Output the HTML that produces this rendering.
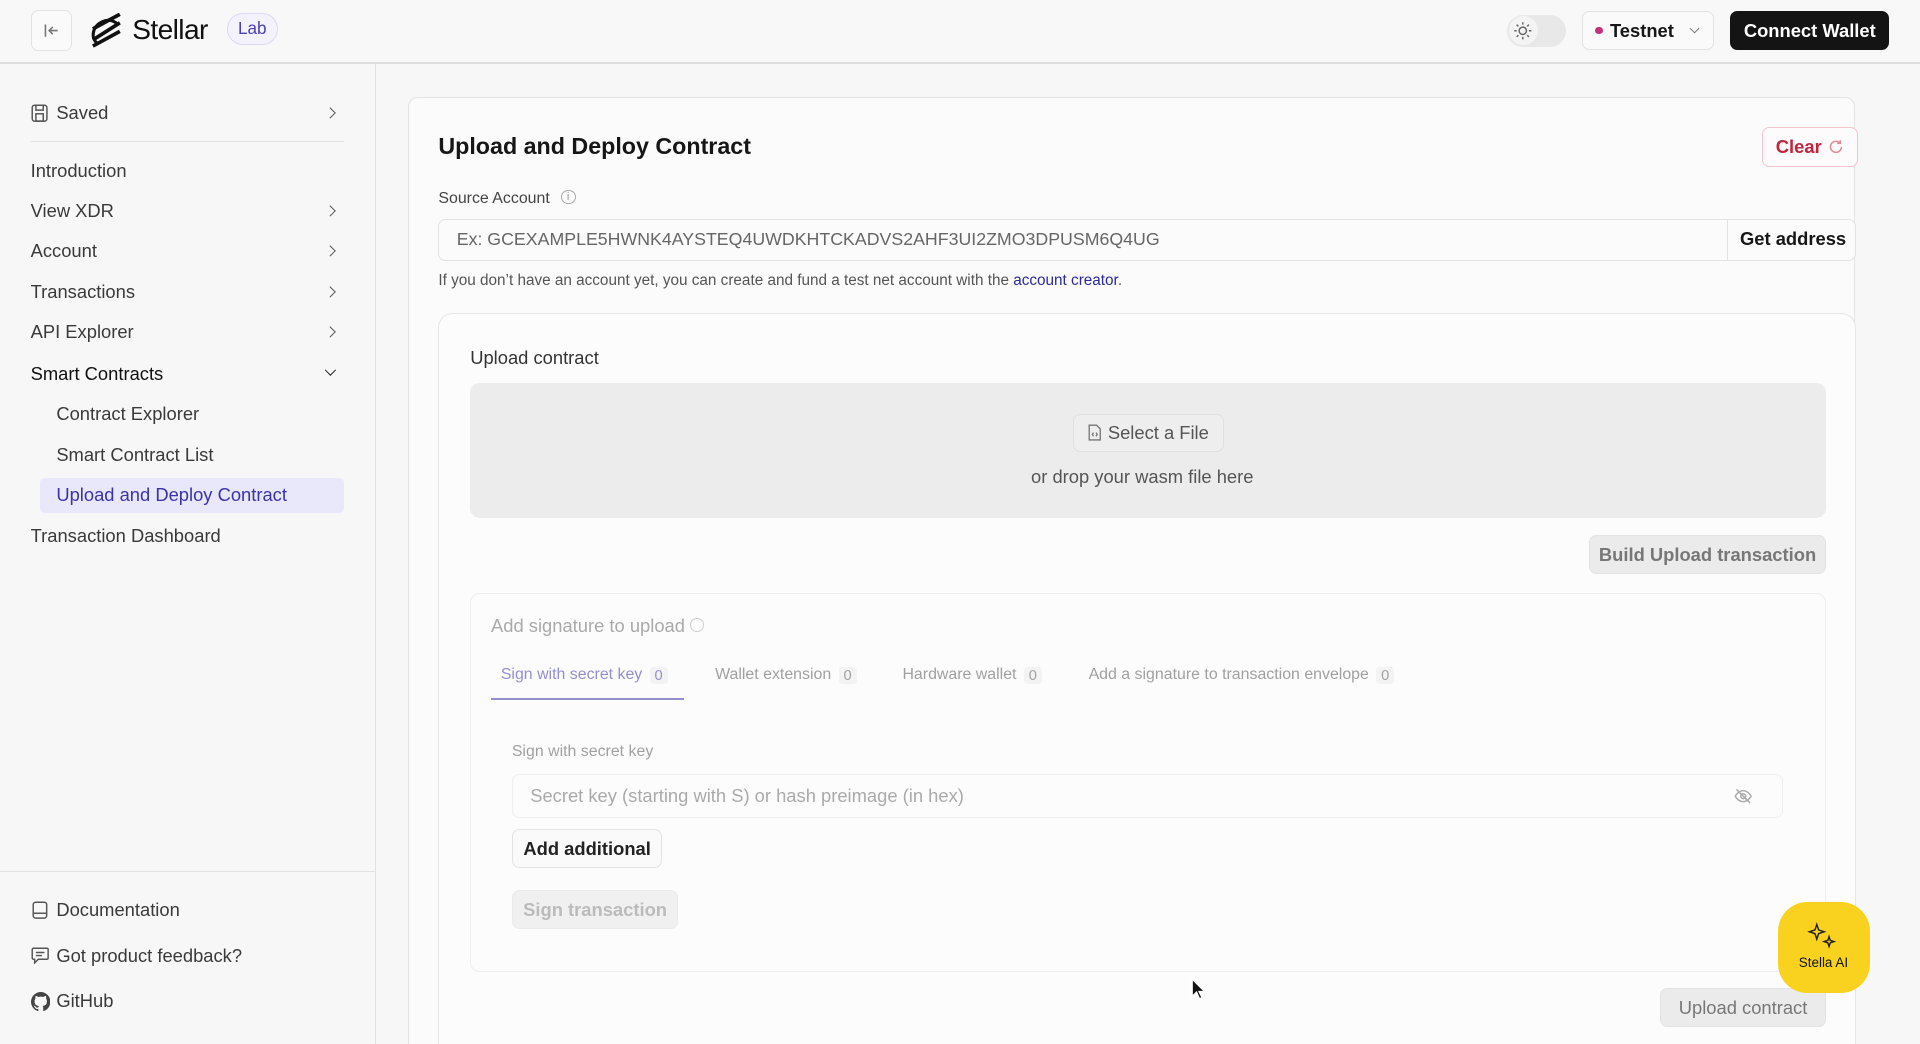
<!DOCTYPE html>
<html><head><meta charset="utf-8"><style>
html,body{margin:0;padding:0;overflow:hidden;height:1044px;width:1920px;background:#f7f7f7;}
#w{width:1568px;height:853px;zoom:1.22449;background:#f7f7f7;font-family:"Liberation Sans",sans-serif;color:#171717;position:relative;overflow:hidden;}
.a{position:absolute;}
.t{position:absolute;white-space:nowrap;line-height:1;}
.nav{font-size:15px;color:#3a3a3a;left:25px;}
.chev{position:absolute;left:266px;width:6px;height:6px;border-right:1.5px solid #555;border-top:1.5px solid #555;transform:rotate(45deg);}
.btn{position:absolute;border:1px solid #e3e3e3;border-radius:6px;box-sizing:border-box;display:flex;align-items:center;justify-content:center;font-weight:bold;font-size:15px;}
.fade{opacity:.55}
.badge{display:inline-block;background:#ececec;border-radius:3px;padding:1px 4px;margin-left:6px;font-size:12px;}
</style></head><body><div id="w">
<div class="a" style="left:0;top:0;width:1568px;height:51px;background:#f8f8f8;border-bottom:2px solid #dedede;"></div>
<div class="btn" style="left:25px;top:8px;width:34px;height:34px;background:#fafafa;"><svg width="14" height="14" viewBox="0 0 14 14" fill="none" stroke="#777" stroke-width="1.3"><path d="M2 2v10M12 7H5M8 4L5 7l3 3"/></svg></div>
<svg class="a" style="left:72px;top:11px" width="30" height="28" viewBox="0 0 30 28" fill="none" stroke="#111" stroke-width="3"><path d="M4 22L26 8M4 13L26 1M4 27L26 15"/><path d="M8 25c-6-4-5-14 4-18 4-2 9-1 12 2" stroke-width="2.5"/></svg>
<div class="t" style="left:108px;top:13px;font-size:23px;color:#111;letter-spacing:-0.5px">Stellar</div>
<div class="a" style="left:185px;top:11px;width:42px;height:26px;border:1px solid #ddd8f5;border-radius:13px;box-sizing:border-box;background:#f4f2fd;color:#4b40b5;font-size:14px;text-align:center;line-height:24px">Lab</div>
<div class="a" style="left:1231px;top:12px;width:48px;height:26px;border-radius:13px;background:#e8e8e8;"></div>
<div class="a" style="left:1232px;top:13px;width:24px;height:24px;border-radius:12px;background:#f4f4f4;"></div>
<svg class="a" style="left:1236px;top:17px" width="16" height="16" viewBox="0 0 16 16" fill="none" stroke="#666" stroke-width="1.2"><circle cx="8" cy="8" r="3"/><path d="M8 1v2M8 13v2M1 8h2M13 8h2M3 3l1.4 1.4M11.6 11.6L13 13M3 13l1.4-1.4M11.6 4.4L13 3"/></svg>
<div class="btn" style="left:1292px;top:9px;width:108px;height:32px;background:#fafafa;justify-content:flex-start;padding-left:10px;"><span style="width:6px;height:6px;border-radius:3px;background:#c2327a;margin-right:6px"></span>Testnet<span style="width:5px;height:5px;border-right:1.2px solid #777;border-bottom:1.2px solid #777;transform:rotate(45deg);margin-left:14px;margin-top:-4px"></span></div>
<div class="btn" style="left:1413px;top:9px;width:130px;height:32px;background:#141414;color:#fff;border:none;">Connect Wallet</div>
<div class="a" style="left:306px;top:52px;width:1px;height:801px;background:#e2e2e2"></div>
<svg class="a" style="left:25px;top:85px" width="14" height="15" viewBox="0 0 14 15" fill="none" stroke="#555" stroke-width="1.2"><rect x="1" y="1" width="12" height="13" rx="2"/><rect x="4" y="8" width="6" height="6"/><path d="M4 1v4h6V1"/></svg>
<div class="t nav" style="left:46px;top:85px">Saved</div><div class="chev" style="top:89px"></div>
<div class="a" style="left:25px;top:115px;width:256px;height:1px;background:#e2e2e2"></div>
<div class="t nav" style="top:132px">Introduction</div>
<div class="t nav" style="top:165px">View XDR</div><div class="chev" style="top:169px"></div>
<div class="t nav" style="top:198px">Account</div><div class="chev" style="top:202px"></div>
<div class="t nav" style="top:231px">Transactions</div><div class="chev" style="top:235px"></div>
<div class="t nav" style="top:264px">API Explorer</div><div class="chev" style="top:268px"></div>
<div class="t nav" style="top:298px;color:#111">Smart Contracts</div><div class="chev" style="top:299px;transform:rotate(135deg);border-color:#222"></div>
<div class="t nav" style="left:46px;top:331px">Contract Explorer</div>
<div class="t nav" style="left:46px;top:364px">Smart Contract List</div>
<div class="a" style="left:33px;top:390px;width:248px;height:29px;background:#e9e7fa;border-radius:4px"></div>
<div class="t nav" style="left:46px;top:397px;color:#3d33a8">Upload and Deploy Contract</div>
<div class="t nav" style="top:430px">Transaction Dashboard</div>
<div class="a" style="left:0;top:711px;width:306px;height:1px;background:#e2e2e2"></div>
<svg class="a" style="left:26px;top:736px" width="13" height="15" viewBox="0 0 13 15" fill="none" stroke="#555" stroke-width="1.2"><rect x="1" y="1" width="11" height="13" rx="2"/><path d="M1 10h11"/></svg>
<div class="t nav" style="left:46px;top:736px">Documentation</div>
<svg class="a" style="left:25px;top:773px" width="15" height="14" viewBox="0 0 15 14" fill="none" stroke="#555" stroke-width="1.2"><path d="M2 1h11a1 1 0 0 1 1 1v7a1 1 0 0 1-1 1H6l-3 3v-3H2a1 1 0 0 1-1-1V2a1 1 0 0 1 1-1zM4 4.5h7M4 7h5"/></svg>
<div class="t nav" style="left:46px;top:773px">Got product feedback?</div>
<svg class="a" style="left:25px;top:810px" width="16" height="16" viewBox="0 0 16 16" fill="#444"><path d="M8 0a8 8 0 0 0-2.5 15.6c.4 0 .5-.2.5-.4v-1.4c-2.2.5-2.7-1-2.7-1-.4-.9-.9-1.2-.9-1.2-.7-.5.1-.5.1-.5.8.1 1.2.8 1.2.8.7 1.3 1.9.9 2.3.7.1-.5.3-.9.5-1.1-1.8-.2-3.6-.9-3.6-4 0-.9.3-1.6.8-2.1-.1-.2-.4-1 .1-2.1 0 0 .7-.2 2.2.8a7.5 7.5 0 0 1 4 0c1.5-1 2.2-.8 2.2-.8.4 1.1.2 1.9.1 2.1.5.6.8 1.3.8 2.1 0 3.1-1.9 3.7-3.6 3.9.3.3.5.8.5 1.5v2.2c0 .2.1.5.6.4A8 8 0 0 0 8 0z"/></svg>
<div class="t nav" style="left:46px;top:810px">GitHub</div>
<div class="a" style="left:333px;top:79px;width:1182px;height:774px;background:#fbfbfb;border:1px solid #e4e4e4;border-bottom:none;border-radius:8px 8px 0 0;box-sizing:border-box"></div>
<div class="t" style="left:358px;top:110px;font-size:19px;font-weight:bold;color:#161616">Upload and Deploy Contract</div>
<div class="btn" style="left:1439px;top:104px;width:78px;height:32px;border-color:#f3c6ce;color:#c0253c;background:#fdfbfb">Clear <svg style="margin-left:5px" width="13" height="13" viewBox="0 0 13 13" fill="none" stroke="#e28c9a" stroke-width="1.3"><path d="M11 6.5A4.5 4.5 0 1 1 9.5 3M10 1v2.5H7.5"/></svg></div>
<div class="t" style="left:358px;top:156px;font-size:13px;color:#444">Source Account</div>
<div class="a" style="left:458px;top:155px;width:12px;height:12px;border:1px solid #aaa;border-radius:7px;box-sizing:border-box;font-size:9px;color:#999;text-align:center;line-height:11px">i</div>
<div class="a" style="left:358px;top:179px;width:1158px;height:34px;border:1px solid #e3e3e3;border-radius:6px;box-sizing:border-box;background:#fbfbfb"></div>
<div class="a" style="left:1410px;top:180px;width:1px;height:32px;background:#e3e3e3"></div>
<div class="t" style="left:373px;top:189px;font-size:14.5px;color:#666">Ex: GCEXAMPLE5HWNK4AYSTEQ4UWDKHTCKADVS2AHF3UI2ZMO3DPUSM6Q4UG</div>
<div class="t" style="left:1421px;top:188px;font-size:15px;font-weight:bold">Get address</div>
<div class="t" style="left:358px;top:223px;font-size:12.5px;color:#555">If you don’t have an account yet, you can create and fund a test net account with the <span style="color:#2b2b9c">account creator</span>.</div>
<div class="a" style="left:358px;top:256px;width:1158px;height:597px;border:1px solid #e6e6e6;border-bottom:none;border-radius:12px 12px 0 0;box-sizing:border-box;background:#fcfcfc"></div>
<div class="t" style="left:384px;top:285px;font-size:15px;color:#333">Upload contract</div>
<div class="a" style="left:384px;top:313px;width:1107px;height:110px;background:#ececec;border-radius:8px"></div>
<div class="btn" style="left:876px;top:338px;width:124px;height:31px;background:#eeeeee;border-color:#e0e0e0;color:#555;font-weight:normal"><svg style="margin-right:5px" width="11" height="14" viewBox="0 0 11 14" fill="none" stroke="#777" stroke-width="1.1"><path d="M1 1h6l3 3v9H1zM4.5 7L3.5 8.5l1 1.5M6.5 7l1 1.5-1 1.5"/></svg>Select a File</div>
<div class="t" style="left:842px;top:382px;font-size:15px;color:#555">or drop your wasm file here</div>
<div class="btn" style="left:1298px;top:437px;width:193px;height:32px;background:#ebebeb;color:#777">Build Upload transaction</div>
<div class="a" style="left:384px;top:484px;width:1107px;height:310px;border:1px solid #eee;border-radius:8px;box-sizing:border-box"></div>
<div class="fade">
<div class="t" style="left:401px;top:504px;font-size:15px;color:#666">Add signature to upload <span style="display:inline-block;width:10px;height:10px;border:1px solid #aaa;border-radius:6px"></span></div>
<div class="t" style="left:409px;top:545px;font-size:13px;color:#3d33a8">Sign with secret key<span class="badge">0</span></div>
<div class="a" style="left:401px;top:570px;width:158px;height:2px;background:#3d33a8"></div>
<div class="t" style="left:584px;top:545px;font-size:13px;color:#555">Wallet extension<span class="badge">0</span></div>
<div class="t" style="left:737px;top:545px;font-size:13px;color:#555">Hardware wallet<span class="badge">0</span></div>
<div class="t" style="left:889px;top:545px;font-size:13px;color:#555">Add a signature to transaction envelope<span class="badge">0</span></div>
<div class="t" style="left:418px;top:608px;font-size:13px;color:#555">Sign with secret key</div>
<div class="a" style="left:418px;top:632px;width:1038px;height:36px;border:1px solid #e3e3e3;border-radius:6px;box-sizing:border-box"></div>
<div class="t" style="left:433px;top:643px;font-size:15px;color:#666">Secret key (starting with S) or hash preimage (in hex)</div>
<svg class="a" style="left:1416px;top:643px" width="15" height="15" viewBox="0 0 15 15" fill="none" stroke="#666" stroke-width="1.2"><path d="M1 7.5s2.5-4.5 6.5-4.5 6.5 4.5 6.5 4.5-2.5 4.5-6.5 4.5S1 7.5 1 7.5zM2 2l11 11"/><circle cx="7.5" cy="7.5" r="2"/></svg>
</div>
<div class="btn" style="left:418px;top:677px;width:123px;height:32px;background:#fafafa;color:#222">Add additional</div>
<div class="btn" style="left:418px;top:727px;width:136px;height:32px;background:#f0f0f0;color:#bbb;border-color:#eaeaea">Sign transaction</div>
<div class="btn" style="left:1356px;top:807px;width:135px;height:32px;background:#ebebeb;color:#777;font-weight:normal">Upload contract</div>
<div class="a" style="left:1452px;top:737px;width:75px;height:74px;background:#f9d21f;border-radius:24px;"></div>
<svg class="a" style="left:1476px;top:753px" width="26" height="24" viewBox="0 0 26 24" fill="none" stroke="#222" stroke-width="1.2"><path d="M8 2l1.5 4.5L14 8l-4.5 1.5L8 14l-1.5-4.5L2 8l4.5-1.5zM18 12l1 3 3 1-3 1-1 3-1-3-3-1 3-1z"/></svg>
<div class="t" style="left:1469px;top:781px;font-size:11px;color:#111">Stella AI</div>
<svg class="a" style="left:973px;top:799px" width="12" height="18" viewBox="0 0 12 18"><path d="M1 1v14l3.5-3.5 2.5 5.5 2-1-2.5-5H11z" fill="#111" stroke="#fff" stroke-width="1"/></svg>
</div></body></html>
